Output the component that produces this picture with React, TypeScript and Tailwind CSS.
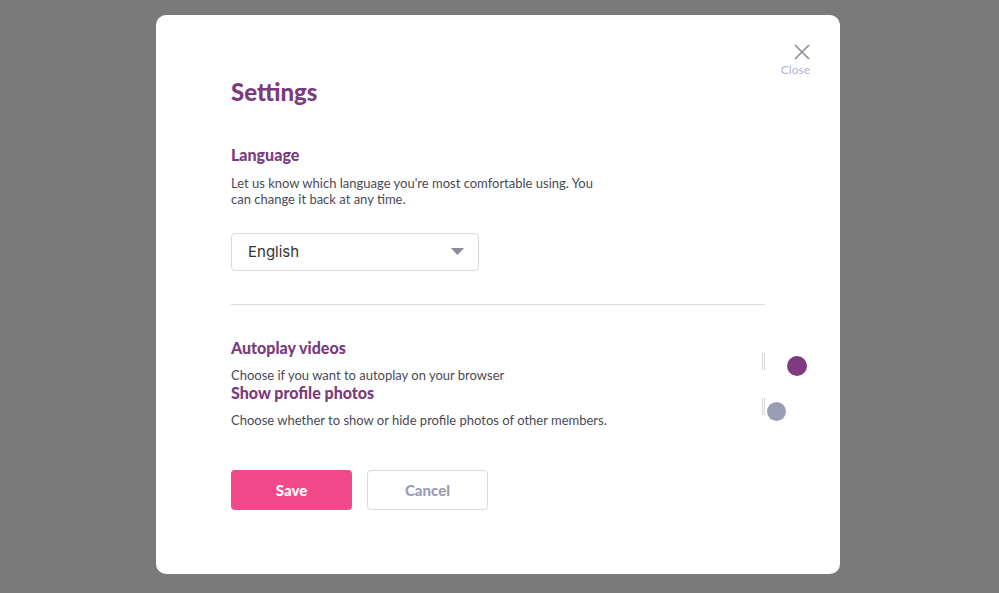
import React, { useState } from 'react';

const font = { fontFamily: 'Lato, "Noto Sans", sans-serif' };

interface ToggleRowProps {
  title: string;
  description: string;
  on: boolean;
  onToggle: () => void;
}

const ToggleRow: React.FC<ToggleRowProps> = ({ title, description, on, onToggle }) => (
  <div className="flex items-start">
    <div className="flex-1">
      <h3 className="text-[16px] font-black leading-[20px] text-[#7b3b7d]">{title}</h3>
      <p className="mt-[9px] text-[13px] leading-[16px] text-[#4a4a55]">{description}</p>
    </div>
    {/* switch track is a thin sliver, knob hangs past the content edge */}
    <button onClick={onToggle} className="relative mt-[15px] h-[20px] w-[1px] shrink-0">
      <span className="absolute left-[-2px] top-0 h-[17px] w-[3px] border-x border-[#d7d7dc]" />
      {on ? (
        <span className="absolute left-[23px] top-[3px] h-[20px] w-[20px] rounded-full bg-[#7f3a82]" />
      ) : (
        <span className="absolute left-[3px] top-[4px] h-[19px] w-[19px] rounded-full bg-[#9a9db3]" />
      )}
    </button>
  </div>
);

export default function App() {
  const [autoplay, setAutoplay] = useState(true);
  const [photos, setPhotos] = useState(false);

  return (
    <div className="h-[593px] w-full bg-[#7a7a7a] pl-[156px] pt-[15px]" style={font}>
      <div className="relative h-[559px] w-[684px] rounded-[10px] bg-white px-[75px]">
        <button className="absolute right-[29px] top-[28px] flex flex-col items-end text-[#b3b3d3]">
          <svg width="18" height="18" viewBox="0 0 18 18" stroke="#8a8a99" strokeWidth="1.6" fill="none">
            <path d="M2 2 L16 16 M16 2 L2 16" />
          </svg>
          <span className="mr-[1px] mt-[2px] text-[12px] leading-[13px]">Close</span>
        </button>

        <h1 className="pt-[64px] text-[24px] font-black leading-[26px] text-[#7b3b7d]">Settings</h1>

        <h2 className="mt-[40px] text-[16px] font-black leading-[20px] text-[#7b3b7d]">Language</h2>
        <p className="mt-[10px] w-[370px] text-[13px] leading-[16px] text-[#4a4a55]">
          Let us know which language you're most comfortable using. You can change it back at any time.
        </p>

        <div className="mt-[26px] flex h-[38px] w-[248px] items-center justify-between rounded-[4px] border border-[#d9d9de] pl-[16px] pr-[14px]">
          <span className="text-[15px] text-[#333]" style={{ fontFamily: 'Inter, sans-serif' }}>English</span>
          <svg width="13" height="8" viewBox="0 0 13 8">
            <path d="M0 0 H13 L6.5 7 Z" fill="#8a8a99" />
          </svg>
        </div>

        <div className="mt-[33px] h-px w-[534px] bg-[#dcdcdf]" />

        <div className="mt-[33px] flex flex-col">
          <ToggleRow
            title="Autoplay videos"
            description="Choose if you want to autoplay on your browser"
            on={autoplay}
            onToggle={() => setAutoplay(!autoplay)}
          />
          <ToggleRow
            title="Show profile photos"
            description="Choose whether to show or hide profile photos of other members."
            on={photos}
            onToggle={() => setPhotos(!photos)}
          />
        </div>

        <div className="mt-[42px] flex gap-[15px]">
          <button className="h-[40px] w-[121px] rounded-[4px] bg-[#f2498b] text-[15px] font-black text-white">Save</button>
          <button className="h-[40px] w-[121px] rounded-[4px] border border-[#d9d9de] text-[15px] font-black text-[#9a9db3]">Cancel</button>
        </div>
      </div>
    </div>
  );
}
